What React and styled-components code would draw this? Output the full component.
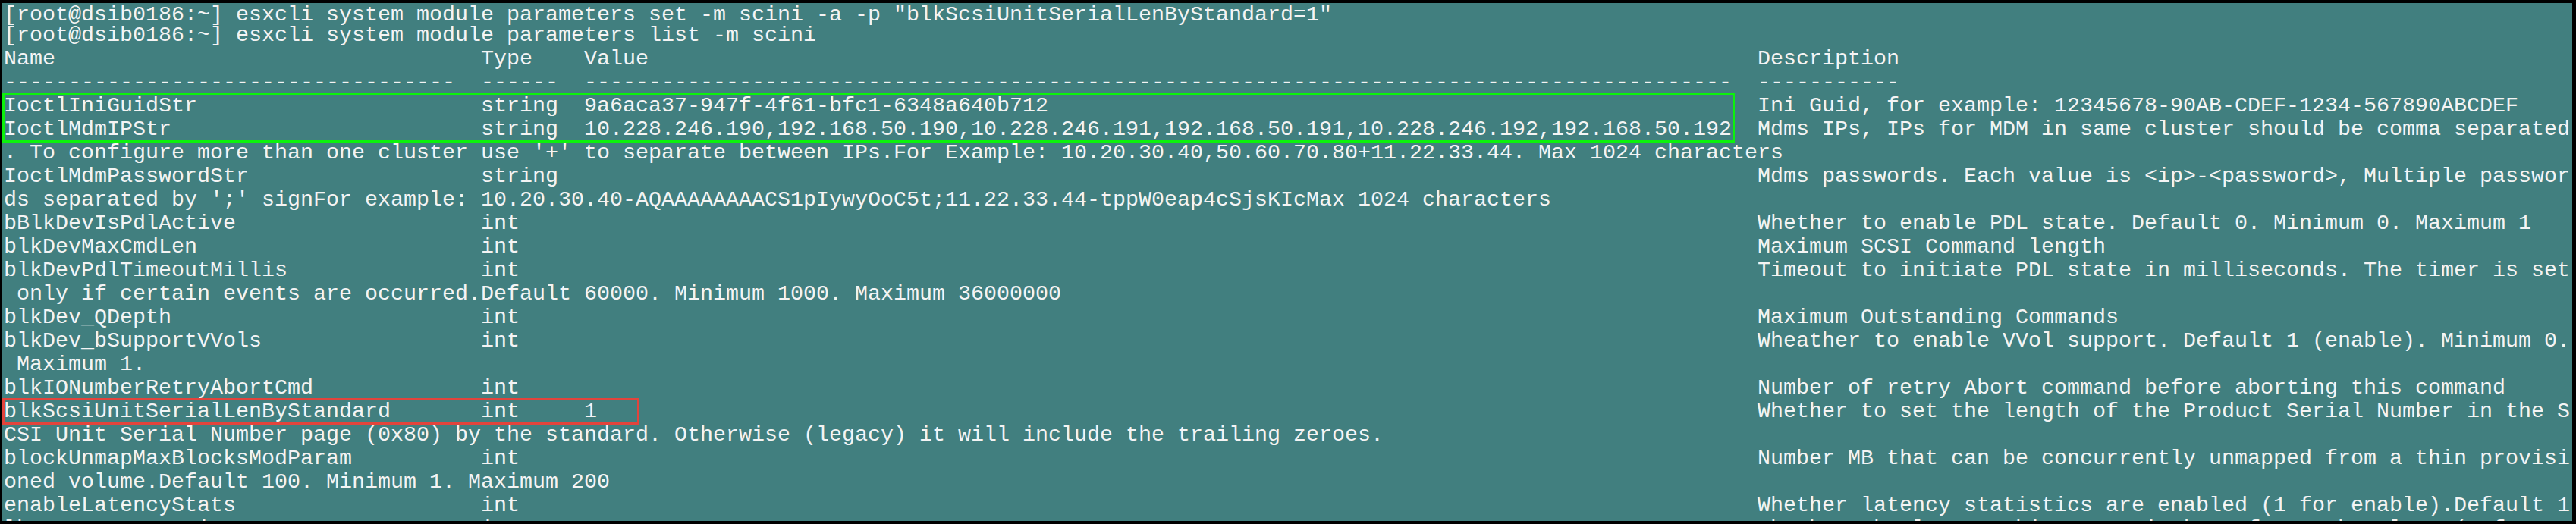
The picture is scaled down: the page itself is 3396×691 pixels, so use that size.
import React from "react";
import styled, { createGlobalStyle } from "styled-components";

const GlobalStyle = createGlobalStyle`
  html, body {
    margin: 0;
    padding: 0;
    background: #000;
  }
`;

const Frame = styled.div`
  width: 3396px;
  height: 691px;
  box-sizing: border-box;
  padding: 4px 5px 4px 3px;
  background: #000;
`;

const Screen = styled.div`
  height: 100%;
  box-sizing: border-box;
  overflow: hidden;
  padding: 1px 0 0 2px;
  background: #417f7f;
  color: #f4f4f4;
  font-family: "Liberation Mono", "Courier New", monospace;
  font-size: 28.33px;
`;

const Line = styled.div`
  height: 31px;
  line-height: 31px;
  white-space: pre;
`;

const Prompt = styled(Line)`
  height: 23px;
  line-height: 23px;
  padding-top: 3px;
`;

const Row = styled.div`
  display: grid;
  grid-template-columns: 629px 136px 1547px max-content;
  height: 31px;
  line-height: 31px;
  white-space: pre;
`;

const Cell = styled.span`
  overflow: visible;
`;

const Mark = styled.div`
  width: ${(p) => p.$width}px;
  outline: 3px solid ${(p) => p.$color};
  outline-offset: -1px;
`;

const dash = (n) => "-".repeat(n);

const ParamRow = ({ name, type, value = "", desc }) => (
  <Row>
    <Cell>{name}</Cell>
    <Cell>{type}</Cell>
    <Cell>{value}</Cell>
    <Cell>{desc}</Cell>
  </Row>
);

const App = () => {
  return (
    <Frame>
      <GlobalStyle />
      <Screen>
        <Prompt>
          [root@dsib0186:~] esxcli system module parameters set -m scini -a -p "blkScsiUnitSerialLenByStandard=1"
        </Prompt>
        <Line>[root@dsib0186:~] esxcli system module parameters list -m scini</Line>
        <ParamRow name="Name" type="Type" value="Value" desc="Description" />
        <ParamRow name={dash(35)} type={dash(6)} value={dash(89)} desc={dash(11)} />
        <Mark $width={2280} $color="#0cf20c">
          <ParamRow
            name="IoctlIniGuidStr"
            type="string"
            value="9a6aca37-947f-4f61-bfc1-6348a640b712"
            desc="Ini Guid, for example: 12345678-90AB-CDEF-1234-567890ABCDEF"
          />
          <ParamRow
            name="IoctlMdmIPStr"
            type="string"
            value="10.228.246.190,192.168.50.190,10.228.246.191,192.168.50.191,10.228.246.192,192.168.50.192"
            desc="Mdms IPs, IPs for MDM in same cluster should be comma separated"
          />
        </Mark>
        <Line>
          . To configure more than one cluster use '+' to separate between IPs.For Example: 10.20.30.40,50.60.70.80+11.22.33.44. Max 1024 characters
        </Line>
        <ParamRow
          name="IoctlMdmPasswordStr"
          type="string"
          desc="Mdms passwords. Each value is <ip>-<password>, Multiple passwor"
        />
        <Line>
          ds separated by ';' signFor example: 10.20.30.40-AQAAAAAAAACS1pIywyOoC5t;11.22.33.44-tppW0eap4cSjsKIcMax 1024 characters
        </Line>
        <ParamRow
          name="bBlkDevIsPdlActive"
          type="int"
          desc="Whether to enable PDL state. Default 0. Minimum 0. Maximum 1"
        />
        <ParamRow name="blkDevMaxCmdLen" type="int" desc="Maximum SCSI Command length" />
        <ParamRow
          name="blkDevPdlTimeoutMillis"
          type="int"
          desc="Timeout to initiate PDL state in milliseconds. The timer is set"
        />
        <Line> only if certain events are occurred.Default 60000. Minimum 1000. Maximum 36000000</Line>
        <ParamRow name="blkDev_QDepth" type="int" desc="Maximum Outstanding Commands" />
        <ParamRow
          name="blkDev_bSupportVVols"
          type="int"
          desc="Wheather to enable VVol support. Default 1 (enable). Minimum 0."
        />
        <Line> Maximum 1.</Line>
        <ParamRow
          name="blkIONumberRetryAbortCmd"
          type="int"
          desc="Number of retry Abort command before aborting this command"
        />
        <Mark $width={836} $color="#e2443c">
          <ParamRow
            name="blkScsiUnitSerialLenByStandard"
            type="int"
            value="1"
            desc="Whether to set the length of the Product Serial Number in the S"
          />
        </Mark>
        <Line>
          CSI Unit Serial Number page (0x80) by the standard. Otherwise (legacy) it will include the trailing zeroes.
        </Line>
        <ParamRow
          name="blockUnmapMaxBlocksModParam"
          type="int"
          desc="Number MB that can be concurrently unmapped from a thin provisi"
        />
        <Line>oned volume.Default 100. Minimum 1. Maximum 200</Line>
        <ParamRow
          name="enableLatencyStats"
          type="int"
          desc="Whether latency statistics are enabled (1 for enable).Default 1"
        />
        <ParamRow
          name="lbNetConnRetryTimeout"
          type="int"
          desc="Whether the latency histogram is kept for each volume (1 for enabl"
        />
      </Screen>
    </Frame>
  );
};

export default App;
